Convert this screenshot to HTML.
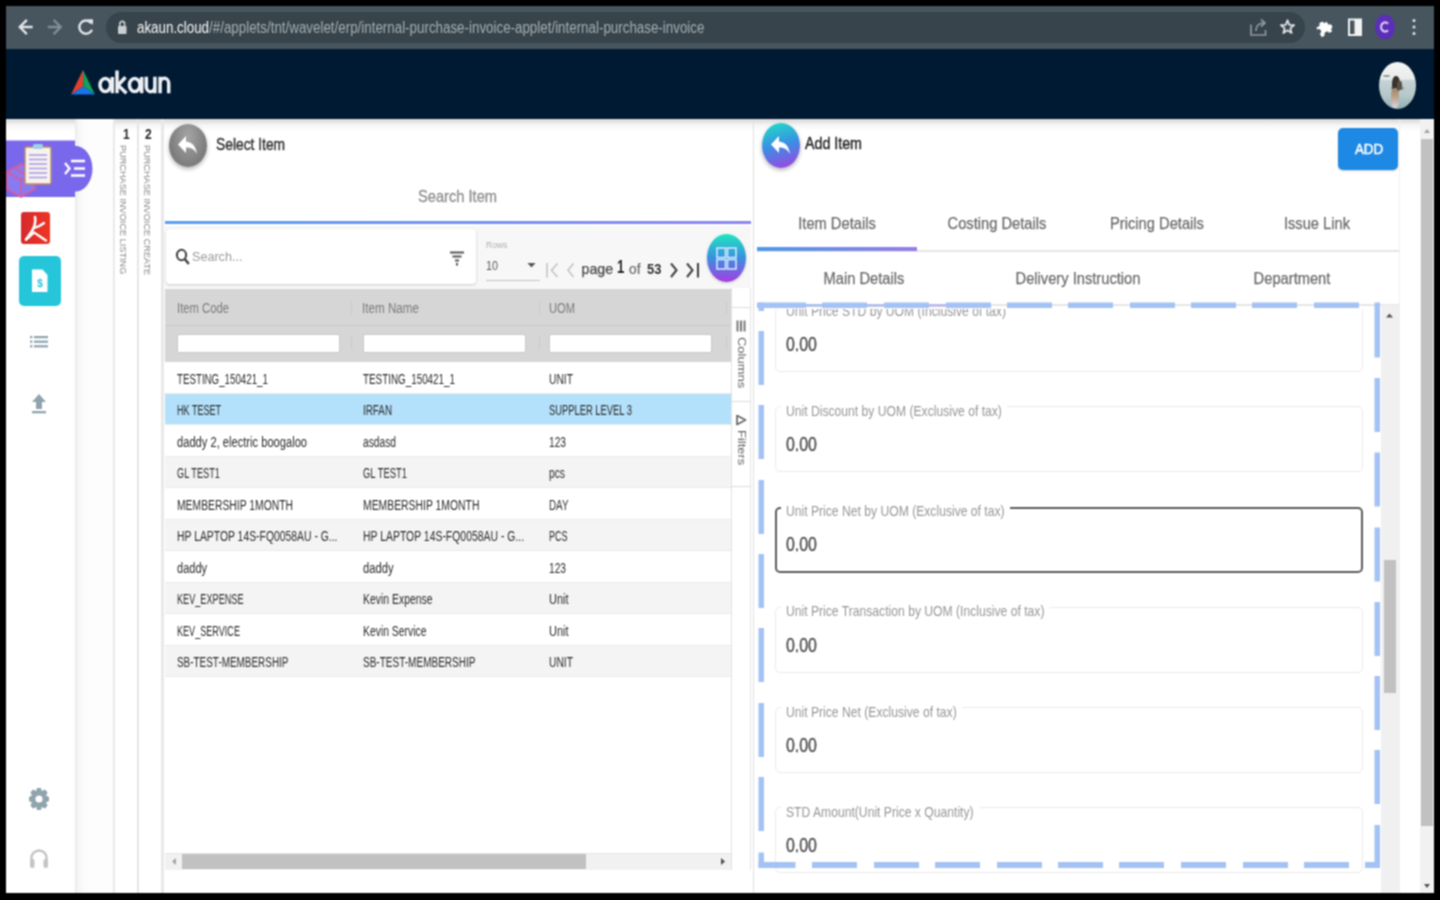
<!DOCTYPE html>
<html><head><meta charset="utf-8">
<style>
*{box-sizing:border-box;margin:0;padding:0}
html,body{width:1440px;height:900px;overflow:hidden;background:#000;font-family:"Liberation Sans",sans-serif}
.a{position:absolute}
.nw{white-space:nowrap}
</style></head><body><svg width="0" height="0" style="position:absolute"><filter id="soft" x="0" y="0" width="100%" height="100%" color-interpolation-filters="sRGB"><feConvolveMatrix order="3" kernelMatrix="1 2 1 2 4 2 1 2 1" preserveAlpha="true" edgeMode="duplicate"/></filter></svg><div id="root" style="position:absolute;left:0;top:0;width:1440px;height:900px;overflow:hidden;background:#000;filter:url(#soft)">
<div class="a" style="left:6px;top:6px;width:1428px;height:43px;background:#47555e;"></div>
<div class="a" style="left:106px;top:11.7px;width:1199px;height:31.6px;background:#38444b;border-radius:16px"></div>
<svg class="a" style="left:0;top:0" width="1440" height="50" viewBox="0 0 1440 50">
 <g fill="none" stroke="#dfe3e6" stroke-width="2.4" stroke-linecap="square">
  <path d="M31.5 27 H20.5 M26 20.8 L19.8 27 L26 33.2"/>
 </g>
 <g fill="none" stroke="#7f8d95" stroke-width="2.4" stroke-linecap="square">
  <path d="M49 27 H60 M54.5 20.8 L60.7 27 L54.5 33.2"/>
 </g>
 <path d="M91.3 23.2 A6.6 6.6 0 1 0 92 29.8" fill="none" stroke="#dfe3e6" stroke-width="2.4"/>
 <path d="M87.3 19.3 L93 19.3 L93 25 Z" fill="#dfe3e6"/>
 <rect x="118" y="26" width="8.5" height="8" rx="1" fill="#c9ced1"/>
 <path d="M119.8 26.5 V23.8 a2.4 2.4 0 0 1 4.8 0 V26.5" fill="none" stroke="#c9ced1" stroke-width="1.6"/>
 <g fill="none" stroke="#8a979e" stroke-width="1.7">
  <path d="M1251 24.5 V35 H1265.5 V30"/>
  <path d="M1256 31 C1256 25 1259 23 1264 23 M1261 19.5 L1265 23 L1261 26.5"/>
 </g>
 <path d="M1287.50 20.30 L1289.26 24.87 L1294.16 25.14 L1290.35 28.23 L1291.61 32.96 L1287.50 30.30 L1283.39 32.96 L1284.65 28.23 L1280.84 25.14 L1285.74 24.87 Z" fill="none" stroke="#dfe3e6" stroke-width="1.8" stroke-linejoin="round"/>
 <path d="M1318 24 H1322 a2.5 2.5 0 0 1 5 0 H1330 V27.5 a2.5 2.5 0 0 1 0 5 V35 H1326.5 a2.5 2.5 0 0 0 -5 0 H1318 V31 a2.5 2.5 0 0 0 0 -5 Z" fill="#fff" transform="rotate(-30 1324 29)"/>
 <rect x="1349" y="19.5" width="12" height="15.5" fill="none" stroke="#f2f2f2" stroke-width="2"/>
 <rect x="1354.5" y="19.5" width="6.5" height="15.5" fill="#f2f2f2"/>
 <ellipse cx="1385" cy="27" rx="10" ry="12.5" fill="#5b2fb8"/>
 <path d="M1388 23.8 A4 4.6 0 1 0 1388 30.2" fill="none" stroke="#d8c9f4" stroke-width="2.2"/>
 <circle cx="1414" cy="20.5" r="1.5" fill="#dfe3e6"/><circle cx="1414" cy="27" r="1.5" fill="#dfe3e6"/><circle cx="1414" cy="33.5" r="1.5" fill="#dfe3e6"/>
</svg>
<div class="a nw" style="left:137px;top:19.96px;font-size:16px;line-height:16px;color:#a3adb3;transform-origin:0 0;transform:scale(0.835,1.0);"><span style="color:#f4f6f7">akaun.cloud</span>/#/applets/tnt/wavelet/erp/internal-purchase-invoice-applet/internal-purchase-invoice</div>
<div class="a" style="left:6px;top:49px;width:1428px;height:70px;background:#011a33;"></div>
<svg class="a" style="left:68px;top:66px" width="32" height="32" viewBox="68 66 32 32">
 <path d="M83 70 L71 94.5 L83.3 86.5 Z" fill="#e2402f"/>
 <path d="M83 70 L95 94.5 L83.3 86.5 Z" fill="#16a05a"/>
 <path d="M71 94.5 L83.3 86.5 L95 94.5 Z" fill="#1a73e8"/>
</svg>
<svg class="a" style="left:95px;top:66px" width="80" height="32" viewBox="95 66 80 32">
 <g fill="none" stroke="#eceef1" stroke-width="3.5">
  <ellipse cx="105.3" cy="85" rx="5.3" ry="6.4"/>
  <path d="M112.3 77 V93.2"/>
  <path d="M117 70.5 V93.2"/>
  <path d="M125.5 77.2 L118 85.2 L126.5 93.2"/>
  <ellipse cx="134.7" cy="85" rx="5.3" ry="6.4"/>
  <path d="M141.7 77 V93.2"/>
  <path d="M146.3 76.8 V86.5 A4.3 5.2 0 0 0 154.9 86.5 M154.9 76.8 V93.2"/>
  <path d="M160.1 93.2 V76.8 M160.1 83.5 A4.3 5.2 0 0 1 168.7 83.5 V93.2"/>
 </g>
</svg>
<div class="a" style="left:1379px;top:62px;width:37px;height:47px;border-radius:50%;overflow:hidden;background:linear-gradient(#f4f5f4 0%,#e8ecea 36%,#c4d2d4 40%,#b6c8ca 70%,#92b0b2 100%)">
 <div class="a" style="left:4px;top:13px;width:7px;height:2px;border-radius:40%;background:#8a9a98"></div>
 <div class="a" style="left:12px;top:24px;width:13px;height:4px;border-radius:40%;background:#6d7a70;opacity:0.6"></div>
 <div class="a" style="left:13px;top:14px;width:8px;height:17px;border-radius:45%;background:#38342c"></div>
 <div class="a" style="left:12px;top:26px;width:8px;height:20px;border-radius:40%;background:linear-gradient(#a08568,#b9a28a 45%,#dcd6e0)"></div>
 <div class="a" style="left:18px;top:19px;width:5px;height:9px;border-radius:40%;background:#5a5045"></div>
</div>
<div class="a" style="left:6px;top:119px;width:1428px;height:774px;background:#fff;"></div>
<div class="a" style="left:6px;top:119px;width:1428px;height:12px;background:linear-gradient(rgba(0,0,0,0.16),rgba(0,0,0,0.04) 50%,rgba(0,0,0,0));"></div>
<div class="a" style="left:75px;top:119px;width:39px;height:774px;background:linear-gradient(90deg,#e6e6e6 0px,#f3f3f3 2px,#fafafa 7px,#fdfdfd 14px,#fdfdfd);"></div>
<div class="a" style="left:113px;top:119px;width:2px;height:774px;background:#e9e9e9;"></div>
<div class="a" style="left:137px;top:119px;width:2px;height:774px;background:#e6e6e6;"></div>
<div class="a" style="left:161px;top:119px;width:3px;height:774px;background:#e8e8e8;"></div>
<div class="a nw" style="left:122.5px;top:125.80px;font-size:15px;line-height:15px;color:#2a2a2a;font-weight:bold;transform-origin:0 0;transform:scale(0.8,1.0);">1</div>
<div class="a nw" style="left:145px;top:125.80px;font-size:15px;line-height:15px;color:#2a2a2a;font-weight:bold;transform-origin:0 0;transform:scale(0.8,1.0);">2</div>
<div class="a nw" style="left:128px;top:145px;font-size:9.6px;line-height:10px;color:#8a8a8a;transform-origin:0 0;transform:rotate(90deg) scaleX(0.955)">PURCHASE INVOICE LISTING</div>
<div class="a nw" style="left:152px;top:145px;font-size:9.6px;line-height:10px;color:#8a8a8a;transform-origin:0 0;transform:rotate(90deg) scaleX(0.955)">PURCHASE INVOICE CREATE</div>
<svg class="a" style="left:6px;top:138px" width="90" height="62" viewBox="6 138 90 62">
 <path d="M6 140.5 H75 V145.8 A17.5 23 0 0 1 75 191.8 V197 H6 Z" fill="#7a68ec"/>
 <path d="M7 172 L21 164 L35 172 L35 189 L21 197 L7 189 Z" fill="#8a7af2" stroke="#d85a9c" stroke-width="1.6"/>
 <path d="M7 172 L21 180 L35 172 M21 180 V197 M14 168 L28 176 V184" fill="none" stroke="#d85a9c" stroke-width="1.6"/>
 <rect x="25" y="147" width="26" height="37" rx="1.5" fill="#f6f2ee" stroke="#c08a5a" stroke-width="1.3"/>
 <rect x="33" y="144" width="10" height="5" rx="1.5" fill="#9fd0e8"/>
 <g stroke="#a79be6" stroke-width="1.3"><path d="M29 155H47M29 159.5H47M29 164H47M29 168.5H47M29 173H47M29 177.5H47"/></g>
 <g stroke="#fff" stroke-width="2.3" fill="none"><path d="M65 163 L69.5 168.5 L65 174"/><path d="M71 161H85M74 168.5H85M71 175.5H85"/></g>
</svg>
<div class="a" style="left:21px;top:212px;width:29px;height:32px;background:linear-gradient(90deg,#d42a2e,#ee3523);border-radius:3px"></div>
<svg class="a" style="left:21px;top:212px" width="29" height="32" viewBox="0 0 29 32">
 <g fill="none" stroke="#fff" stroke-linecap="round" stroke-linejoin="round">
  <path d="M14 5 C15 10 14 14 11 19 C9 22 7 25 5 27.5" stroke-width="2.6"/>
  <path d="M12 16.5 C16 15.5 20 13.5 23 11" stroke-width="2.3"/>
  <path d="M13 20.5 C17 23 21 26 25 28.5" stroke-width="2.3"/>
  <path d="M5 27.5 C8 26 10 23.5 12.5 21" stroke-width="2"/>
 </g>
</svg>
<div class="a" style="left:19px;top:256px;width:42px;height:50px;background:#26c6da;border-radius:5px"></div>
<svg class="a" style="left:19px;top:256px" width="42" height="50" viewBox="0 0 42 50">
 <path d="M13 13.5 H23.5 L28.5 19 V36 H13 Z" fill="#fff"/>
 <text x="21" y="30.5" font-size="10" font-family="Liberation Sans" font-weight="bold" fill="#26c6da" text-anchor="middle">$</text>
</svg>
<svg class="a" style="left:28px;top:333px" width="22" height="18" viewBox="28 333 22 18">
 <g fill="#90a4ae"><rect x="30" y="336" width="2.4" height="2.2"/><rect x="30" y="340.6" width="2.4" height="2.2"/><rect x="30" y="345.2" width="2.4" height="2.2"/>
 <rect x="34" y="336" width="14" height="2.2"/><rect x="34" y="340.6" width="14" height="2.2"/><rect x="34" y="345.2" width="14" height="2.2"/></g>
</svg>
<svg class="a" style="left:28px;top:390px" width="22" height="26" viewBox="28 390 22 26">
 <path d="M39 394 L46 402 H42 V409 H36 V402 H32 Z" fill="#90a4ae"/>
 <rect x="32" y="411" width="14" height="2.3" fill="#90a4ae"/>
</svg>
<svg class="a" style="left:27px;top:786px" width="24" height="26" viewBox="27 786 24 26">
 <g transform="translate(39 799)">
  <path d="M-2 -11 H2 L2.8 -8 L6 -9.5 L8.6 -6.4 L7 -3.5 L10 -2 V2 L7 3.5 L8.6 6.4 L6 9.5 L2.8 8 L2 11 H-2 L-2.8 8 L-6 9.5 L-8.6 6.4 L-7 3.5 L-10 2 V-2 L-7 -3.5 L-8.6 -6.4 L-6 -9.5 L-2.8 -8 Z" fill="#90a4ae"/>
  <circle r="3.6" fill="#fff"/>
 </g>
</svg>
<svg class="a" style="left:27px;top:845px" width="24" height="26" viewBox="27 845 24 26">
 <path d="M31.5 864 V858 A7.5 7.5 0 0 1 46.5 858 V864" fill="none" stroke="#c4c4c4" stroke-width="2.4"/>
 <rect x="30" y="859" width="4.5" height="9" rx="2" fill="#c4c4c4"/>
 <rect x="43.5" y="859" width="4.5" height="9" rx="2" fill="#c4c4c4"/>
</svg>
<div class="a" style="left:169px;top:124px;width:38px;height:43px;border-radius:50%;background:radial-gradient(ellipse at 50% 30%,#a5a5a5,#6a6a6a);box-shadow:0 2px 4px rgba(0,0,0,0.3)"></div>
<svg class="a" style="left:169px;top:124px" width="38" height="43" viewBox="0 0 38 43">
 <path d="M17 12 L9 20.5 L17 29 V23.5 C22 23.5 25.5 25 28 30 C27 23 23.5 18 17 17.5 Z" fill="#fff"/>
</svg>
<div class="a nw" style="left:216px;top:135.79px;font-size:16.2px;line-height:16.2px;color:#383838;-webkit-text-stroke:0.45px #383838;transform-origin:0 0;transform:scale(0.853,1.0);">Select Item</div>
<div class="a nw" style="left:418px;top:188.09px;font-size:16.2px;line-height:16.2px;color:#8e8e8e;-webkit-text-stroke:0.3px #8e8e8e;transform-origin:0 0;transform:scale(0.905,1.0);">Search Item</div>
<div class="a" style="left:165px;top:221px;width:586px;height:3px;background:linear-gradient(90deg,#5b9ee9,#8e86ea);"></div>
<div class="a" style="left:165px;top:226px;width:586px;height:63px;background:#f7f7f7;"></div>
<div class="a" style="left:166px;top:229px;width:310px;height:55px;background:#fff;border-radius:4px;box-shadow:0 1px 3px rgba(0,0,0,0.18)"></div>
<svg class="a" style="left:174px;top:247px" width="18" height="20" viewBox="0 0 18 20">
 <ellipse cx="7.5" cy="8" rx="4.6" ry="5.2" fill="none" stroke="#444" stroke-width="2.1"/>
 <path d="M10.8 12 L14.8 17" stroke="#444" stroke-width="2.5"/>
</svg>
<div class="a nw" style="left:192px;top:249.90px;font-size:13.7px;line-height:13.7px;color:#9c9c9c;transform-origin:0 0;transform:scale(0.92,1.0);">Search...</div>
<svg class="a" style="left:448px;top:249px" width="18" height="18" viewBox="0 0 18 18">
 <path d="M2 3.5H16M4.5 7.5H13.5M7 11.5H11" stroke="#555" stroke-width="2"/><rect x="8" y="14" width="2" height="2.5" fill="#555"/>
</svg>
<div class="a nw" style="left:486px;top:241.38px;font-size:9px;line-height:9px;color:#b0b0b0;transform-origin:0 0;transform:scale(0.95,1.0);">Rows</div>
<div class="a nw" style="left:486px;top:259.07px;font-size:13.5px;line-height:13.5px;color:#5a5a5a;transform-origin:0 0;transform:scale(0.8,1.0);">10</div>
<svg class="a" style="left:524px;top:260px" width="14" height="10" viewBox="0 0 14 10"><path d="M3.5 3 H11.5 L7.5 7.5 Z" fill="#555"/></svg>
<div class="a" style="left:486px;top:279.5px;width:54px;height:1.2px;background:#c4c4c4;"></div>
<svg class="a" style="left:543px;top:258px" width="160" height="24" viewBox="543 258 160 24">
 <g fill="none" stroke="#c4c4c4" stroke-width="1.6"><path d="M547 263V277.5M557.5 263.5L551.5 270.2L557.5 277"/><path d="M573.5 263.5L568 270.2L573.5 277"/></g>
 <g fill="none" stroke="#444" stroke-width="2.1"><path d="M671 263.5L676.5 270.2L671 277"/><path d="M687 263.5L692.5 270.2L687 277M698 263V277.5"/></g>
</svg>
<div class="a nw" style="left:581.5px;top:261.98px;font-size:14.2px;line-height:14.2px;color:#4a4a4a;-webkit-text-stroke:0.25px #4a4a4a;transform-origin:0 0;">page</div>
<div class="a nw" style="left:616.5px;top:259.19px;font-size:17.5px;line-height:17.5px;color:#2a2a2a;font-weight:bold;transform-origin:0 0;transform:scale(0.75,1.0);">1</div>
<div class="a nw" style="left:628.5px;top:261.73px;font-size:14.5px;line-height:14.5px;color:#6a6a6a;-webkit-text-stroke:0.2px #6a6a6a;transform-origin:0 0;transform:scale(0.95,1.0);">of</div>
<div class="a nw" style="left:647px;top:261.30px;font-size:15px;line-height:15px;color:#333;font-weight:bold;transform-origin:0 0;transform:scale(0.86,1.0);">53</div>
<div class="a" style="left:707px;top:234px;width:39px;height:48px;border-radius:50%;background:linear-gradient(#1de6c0,#3a8fe0 50%,#a63de0);box-shadow:0 1px 3px rgba(0,0,0,0.2)"></div>
<svg class="a" style="left:707px;top:234px" width="39" height="48" viewBox="0 0 39 48">
 <g fill="none" stroke="#cfe6ff" stroke-width="1.6"><rect x="10" y="14" width="8.5" height="9.5"/><rect x="20.5" y="14" width="8.5" height="9.5"/><rect x="10" y="25.5" width="8.5" height="9.5"/><rect x="20.5" y="25.5" width="8.5" height="9.5"/></g>
</svg>
<div class="a" style="left:165px;top:289px;width:566px;height:73px;background:#d6d6d6;"></div>
<div class="a" style="left:165px;top:325px;width:566px;height:1px;background:#cbcbcb;"></div>
<div class="a" style="left:351px;top:302px;width:1px;height:12px;background:#c9c9c9;"></div>
<div class="a" style="left:351px;top:337px;width:1px;height:12px;background:#c9c9c9;"></div>
<div class="a" style="left:539px;top:302px;width:1px;height:12px;background:#c9c9c9;"></div>
<div class="a" style="left:539px;top:337px;width:1px;height:12px;background:#c9c9c9;"></div>
<div class="a" style="left:726px;top:302px;width:1px;height:12px;background:#c9c9c9;"></div>
<div class="a" style="left:726px;top:337px;width:1px;height:12px;background:#c9c9c9;"></div>
<div class="a nw" style="left:177px;top:301.34px;font-size:13px;line-height:13px;color:#7c7c7c;transform-origin:0 0;transform:scale(0.868,1.06);">Item Code</div>
<div class="a nw" style="left:362px;top:301.34px;font-size:13px;line-height:13px;color:#7c7c7c;transform-origin:0 0;transform:scale(0.897,1.06);">Item Name</div>
<div class="a nw" style="left:549px;top:301.34px;font-size:13px;line-height:13px;color:#7c7c7c;transform-origin:0 0;transform:scale(0.858,1.06);">UOM</div>
<div class="a" style="left:177px;top:333.5px;width:163px;height:19.5px;background:#fff;border:1px solid #c5cbcb;border-radius:2px"></div>
<div class="a" style="left:363px;top:333.5px;width:163px;height:19.5px;background:#fff;border:1px solid #c5cbcb;border-radius:2px"></div>
<div class="a" style="left:549px;top:333.5px;width:163px;height:19.5px;background:#fff;border:1px solid #c5cbcb;border-radius:2px"></div>
<div class="a" style="left:165px;top:362.0px;width:566px;height:31.5px;background:#fff;border-bottom:1px solid #ebebeb"></div>
<div class="a nw" style="left:177px;top:371.82px;font-size:13px;line-height:13px;color:#2c2c2c;transform-origin:0 0;transform:scale(0.749,1.08);">TESTING_150421_1</div>
<div class="a nw" style="left:362.5px;top:371.82px;font-size:13px;line-height:13px;color:#2c2c2c;transform-origin:0 0;transform:scale(0.758,1.08);">TESTING_150421_1</div>
<div class="a nw" style="left:549px;top:371.82px;font-size:13px;line-height:13px;color:#2c2c2c;transform-origin:0 0;transform:scale(0.792,1.08);">UNIT</div>
<div class="a" style="left:165px;top:393.5px;width:566px;height:31.5px;background:#b3e0fb;border-bottom:1px solid #ebebeb"></div>
<div class="a nw" style="left:177px;top:403.32px;font-size:13px;line-height:13px;color:#2c2c2c;transform-origin:0 0;transform:scale(0.695,1.08);">HK TESET</div>
<div class="a nw" style="left:362.5px;top:403.32px;font-size:13px;line-height:13px;color:#2c2c2c;transform-origin:0 0;transform:scale(0.759,1.08);">IRFAN</div>
<div class="a nw" style="left:549px;top:403.32px;font-size:13px;line-height:13px;color:#2c2c2c;transform-origin:0 0;transform:scale(0.721,1.08);">SUPPLER LEVEL 3</div>
<div class="a" style="left:165px;top:425.0px;width:566px;height:31.5px;background:#fff;border-bottom:1px solid #ebebeb"></div>
<div class="a nw" style="left:177px;top:434.82px;font-size:13px;line-height:13px;color:#2c2c2c;transform-origin:0 0;transform:scale(0.857,1.08);">daddy 2, electric boogaloo</div>
<div class="a nw" style="left:362.5px;top:434.82px;font-size:13px;line-height:13px;color:#2c2c2c;transform-origin:0 0;transform:scale(0.788,1.08);">asdasd</div>
<div class="a nw" style="left:549px;top:434.82px;font-size:13px;line-height:13px;color:#2c2c2c;transform-origin:0 0;transform:scale(0.783,1.08);">123</div>
<div class="a" style="left:165px;top:456.5px;width:566px;height:31.5px;background:#f4f4f4;border-bottom:1px solid #ebebeb"></div>
<div class="a nw" style="left:177px;top:466.32px;font-size:13px;line-height:13px;color:#2c2c2c;transform-origin:0 0;transform:scale(0.708,1.08);">GL TEST1</div>
<div class="a nw" style="left:362.5px;top:466.32px;font-size:13px;line-height:13px;color:#2c2c2c;transform-origin:0 0;transform:scale(0.725,1.08);">GL TEST1</div>
<div class="a nw" style="left:549px;top:466.32px;font-size:13px;line-height:13px;color:#2c2c2c;transform-origin:0 0;transform:scale(0.789,1.08);">pcs</div>
<div class="a" style="left:165px;top:488.0px;width:566px;height:31.5px;background:#fff;border-bottom:1px solid #ebebeb"></div>
<div class="a nw" style="left:177px;top:497.82px;font-size:13px;line-height:13px;color:#2c2c2c;transform-origin:0 0;transform:scale(0.796,1.08);">MEMBERSHIP 1MONTH</div>
<div class="a nw" style="left:362.5px;top:497.82px;font-size:13px;line-height:13px;color:#2c2c2c;transform-origin:0 0;transform:scale(0.799,1.08);">MEMBERSHIP 1MONTH</div>
<div class="a nw" style="left:549px;top:497.82px;font-size:13px;line-height:13px;color:#2c2c2c;transform-origin:0 0;transform:scale(0.758,1.08);">DAY</div>
<div class="a" style="left:165px;top:519.5px;width:566px;height:31.5px;background:#f4f4f4;border-bottom:1px solid #ebebeb"></div>
<div class="a nw" style="left:177px;top:529.32px;font-size:13px;line-height:13px;color:#2c2c2c;transform-origin:0 0;transform:scale(0.799,1.08);">HP LAPTOP 14S-FQ0058AU - G...</div>
<div class="a nw" style="left:362.5px;top:529.32px;font-size:13px;line-height:13px;color:#2c2c2c;transform-origin:0 0;transform:scale(0.802,1.08);">HP LAPTOP 14S-FQ0058AU - G...</div>
<div class="a nw" style="left:549px;top:529.32px;font-size:13px;line-height:13px;color:#2c2c2c;transform-origin:0 0;transform:scale(0.691,1.08);">PCS</div>
<div class="a" style="left:165px;top:551.0px;width:566px;height:31.5px;background:#fff;border-bottom:1px solid #ebebeb"></div>
<div class="a nw" style="left:177px;top:560.82px;font-size:13px;line-height:13px;color:#2c2c2c;transform-origin:0 0;transform:scale(0.848,1.08);">daddy</div>
<div class="a nw" style="left:362.5px;top:560.82px;font-size:13px;line-height:13px;color:#2c2c2c;transform-origin:0 0;transform:scale(0.863,1.08);">daddy</div>
<div class="a nw" style="left:549px;top:560.82px;font-size:13px;line-height:13px;color:#2c2c2c;transform-origin:0 0;transform:scale(0.783,1.08);">123</div>
<div class="a" style="left:165px;top:582.5px;width:566px;height:31.5px;background:#f4f4f4;border-bottom:1px solid #ebebeb"></div>
<div class="a nw" style="left:177px;top:592.32px;font-size:13px;line-height:13px;color:#2c2c2c;transform-origin:0 0;transform:scale(0.703,1.08);">KEV_EXPENSE</div>
<div class="a nw" style="left:362.5px;top:592.32px;font-size:13px;line-height:13px;color:#2c2c2c;transform-origin:0 0;transform:scale(0.802,1.08);">Kevin Expense</div>
<div class="a nw" style="left:549px;top:592.32px;font-size:13px;line-height:13px;color:#2c2c2c;transform-origin:0 0;transform:scale(0.843,1.08);">Unit</div>
<div class="a" style="left:165px;top:614.0px;width:566px;height:31.5px;background:#fff;border-bottom:1px solid #ebebeb"></div>
<div class="a nw" style="left:177px;top:623.82px;font-size:13px;line-height:13px;color:#2c2c2c;transform-origin:0 0;transform:scale(0.699,1.08);">KEV_SERVICE</div>
<div class="a nw" style="left:362.5px;top:623.82px;font-size:13px;line-height:13px;color:#2c2c2c;transform-origin:0 0;transform:scale(0.799,1.08);">Kevin Service</div>
<div class="a nw" style="left:549px;top:623.82px;font-size:13px;line-height:13px;color:#2c2c2c;transform-origin:0 0;transform:scale(0.843,1.08);">Unit</div>
<div class="a" style="left:165px;top:645.5px;width:566px;height:31.5px;background:#f4f4f4;border-bottom:1px solid #ebebeb"></div>
<div class="a nw" style="left:177px;top:655.32px;font-size:13px;line-height:13px;color:#2c2c2c;transform-origin:0 0;transform:scale(0.764,1.08);">SB-TEST-MEMBERSHIP</div>
<div class="a nw" style="left:362.5px;top:655.32px;font-size:13px;line-height:13px;color:#2c2c2c;transform-origin:0 0;transform:scale(0.771,1.08);">SB-TEST-MEMBERSHIP</div>
<div class="a nw" style="left:549px;top:655.32px;font-size:13px;line-height:13px;color:#2c2c2c;transform-origin:0 0;transform:scale(0.792,1.08);">UNIT</div>
<div class="a" style="left:165px;top:853px;width:567px;height:17px;background:#f1f1f1;border-top:1px solid #e6e6e6"></div>
<div class="a" style="left:182px;top:854px;width:404px;height:15px;background:#c1c1c1;"></div>
<svg class="a" style="left:165px;top:853px" width="567" height="17" viewBox="0 0 567 17"><path d="M11 5 L7 8.5 L11 12Z" fill="#a3a3a3"/><path d="M556 5 L560 8.5 L556 12Z" fill="#505050"/></svg>
<div class="a" style="left:731px;top:288px;width:20px;height:582px;background:#fff;border-left:1px solid #e2e2e2;border-right:1px solid #e2e2e2"></div>
<div class="a" style="left:731px;top:307px;width:20px;height:1px;background:#dcdcdc;"></div>
<div class="a" style="left:731px;top:401px;width:20px;height:1px;background:#dcdcdc;"></div>
<div class="a" style="left:731px;top:486px;width:20px;height:1px;background:#dcdcdc;"></div>
<svg class="a" style="left:733px;top:318px" width="16" height="16" viewBox="0 0 16 16"><g fill="#777"><rect x="3.5" y="2.5" width="2" height="11"/><rect x="7" y="2.5" width="2" height="11"/><rect x="10.5" y="2.5" width="2" height="11"/></g></svg>
<div class="a nw" style="left:746.5px;top:337px;font-size:11px;line-height:11px;color:#666;transform-origin:0 0;transform:rotate(90deg) scaleX(1.18)">Columns</div>
<svg class="a" style="left:733px;top:412px" width="16" height="16" viewBox="0 0 16 16"><path d="M4 3.5 L12.5 8 L4 12.5 Z" fill="none" stroke="#666" stroke-width="1.7" stroke-linejoin="round"/></svg>
<div class="a nw" style="left:746.5px;top:429.5px;font-size:11px;line-height:11px;color:#666;transform-origin:0 0;transform:rotate(90deg) scaleX(1.18)">Filters</div>
<div class="a" style="left:753px;top:119px;width:1px;height:774px;background:#e0e0e0;"></div>
<div class="a" style="left:762px;top:123px;width:38px;height:45px;border-radius:50%;background:linear-gradient(165deg,#1de2c4 0%,#3b8fe4 48%,#a43fe0 100%);box-shadow:0 2px 4px rgba(0,0,0,0.3)"></div>
<svg class="a" style="left:762px;top:123px" width="38" height="45" viewBox="0 0 38 45">
 <path d="M17 13 L9 21.5 L17 30 V24.5 C22 24.5 25.5 26 28 31 C27 24 23.5 19 17 18.5 Z" fill="#fff"/>
</svg>
<div class="a nw" style="left:805px;top:135.94px;font-size:15.9px;line-height:15.9px;color:#2a2a2a;-webkit-text-stroke:0.45px #2a2a2a;transform-origin:0 0;transform:scale(0.896,1.0);">Add Item</div>
<div class="a" style="left:1338px;top:128px;width:60px;height:42px;background:#1e88e5;border-radius:5px;box-shadow:0 1px 2px rgba(0,0,0,0.2)"></div>
<div class="a nw" style="left:1368.5px;top:142.23px;font-size:14.5px;line-height:14.5px;color:#fff;-webkit-text-stroke:0.45px #fff;transform-origin:0 0;transform:scale(0.92,1.0) translateX(-50%);">ADD</div>
<div class="a nw" style="left:836.5px;top:216.13px;font-size:15.8px;line-height:15.8px;color:#6c6c6c;-webkit-text-stroke:0.25px #6c6c6c;transform-origin:0 0;transform:scale(0.93,1.0) translateX(-50%);">Item Details</div>
<div class="a nw" style="left:996.83px;top:216.13px;font-size:15.8px;line-height:15.8px;color:#6c6c6c;-webkit-text-stroke:0.25px #6c6c6c;transform-origin:0 0;transform:scale(0.93,1.0) translateX(-50%);">Costing Details</div>
<div class="a nw" style="left:1157.16px;top:216.13px;font-size:15.8px;line-height:15.8px;color:#6c6c6c;-webkit-text-stroke:0.25px #6c6c6c;transform-origin:0 0;transform:scale(0.93,1.0) translateX(-50%);">Pricing Details</div>
<div class="a nw" style="left:1317.49px;top:216.13px;font-size:15.8px;line-height:15.8px;color:#6c6c6c;-webkit-text-stroke:0.25px #6c6c6c;transform-origin:0 0;transform:scale(0.93,1.0) translateX(-50%);">Issue Link</div>
<div class="a" style="left:757px;top:250px;width:642px;height:1.5px;background:#e6e6e6;"></div>
<div class="a" style="left:757px;top:247px;width:160px;height:3.5px;background:linear-gradient(90deg,#4b9ae8,#9a7ce8);"></div>
<div class="a nw" style="left:863.5px;top:270.63px;font-size:15.8px;line-height:15.8px;color:#6c6c6c;-webkit-text-stroke:0.25px #6c6c6c;transform-origin:0 0;transform:scale(0.93,1.0) translateX(-50%);">Main Details</div>
<div class="a nw" style="left:1077.5px;top:270.63px;font-size:15.8px;line-height:15.8px;color:#6c6c6c;-webkit-text-stroke:0.25px #6c6c6c;transform-origin:0 0;transform:scale(0.93,1.0) translateX(-50%);">Delivery Instruction</div>
<div class="a nw" style="left:1291.5px;top:270.63px;font-size:15.8px;line-height:15.8px;color:#6c6c6c;-webkit-text-stroke:0.25px #6c6c6c;transform-origin:0 0;transform:scale(0.93,1.0) translateX(-50%);">Department</div>
<div class="a" style="left:757px;top:304px;width:642px;height:1.5px;background:#e6e6e6;"></div>
<div class="a" style="left:757px;top:303.5px;width:233px;height:3px;background:linear-gradient(90deg,#4b9ae8,#9a7ce8);opacity:0.45"></div>
<div class="a" style="left:759px;top:308.5px;width:620px;height:584px;overflow:hidden">
<div class="a" style="left:16px;top:-2.3000000000000114px;width:588px;height:66px;border:1px solid #ebebeb;border-radius:5px"></div>
<div class="a" style="left:22px;top:-6.300000000000011px;width:230.0px;height:8px;background:#fff"></div>
<div class="a nw" style="left:27px;top:-3.91px;font-size:13.72px;line-height:13.72px;color:#979797;transform-origin:0 0;transform:scale(0.885,1.0);">Unit Price STD by UOM (Inclusive of tax)</div>
<div class="a nw" style="left:27px;top:25.27px;font-size:18.5px;line-height:18.5px;color:#505050;-webkit-text-stroke:0.35px #505050;transform-origin:0 0;transform:scale(0.86,1.1);">0.00</div>
<div class="a" style="left:16px;top:97.94999999999999px;width:588px;height:66px;border:1px solid #ebebeb;border-radius:5px"></div>
<div class="a" style="left:22px;top:93.94999999999999px;width:225.9px;height:8px;background:#fff"></div>
<div class="a nw" style="left:27px;top:96.34px;font-size:13.72px;line-height:13.72px;color:#979797;transform-origin:0 0;transform:scale(0.885,1.0);">Unit Discount by UOM (Exclusive of tax)</div>
<div class="a nw" style="left:27px;top:125.52px;font-size:18.5px;line-height:18.5px;color:#505050;-webkit-text-stroke:0.35px #505050;transform-origin:0 0;transform:scale(0.86,1.1);">0.00</div>
<div class="a" style="left:16px;top:198.2px;width:588px;height:66px;border:2px solid #5c5c5c;border-radius:5px"></div>
<div class="a" style="left:22px;top:194.2px;width:228.6px;height:8px;background:#fff"></div>
<div class="a nw" style="left:27px;top:196.59px;font-size:13.72px;line-height:13.72px;color:#979797;transform-origin:0 0;transform:scale(0.885,1.0);">Unit Price Net by UOM (Exclusive of tax)</div>
<div class="a nw" style="left:27px;top:225.77px;font-size:18.5px;line-height:18.5px;color:#505050;-webkit-text-stroke:0.35px #505050;transform-origin:0 0;transform:scale(0.86,1.1);">0.00</div>
<div class="a" style="left:16px;top:298.45000000000005px;width:588px;height:66px;border:1px solid #ebebeb;border-radius:5px"></div>
<div class="a" style="left:22px;top:294.45000000000005px;width:268.4px;height:8px;background:#fff"></div>
<div class="a nw" style="left:27px;top:296.84px;font-size:13.72px;line-height:13.72px;color:#979797;transform-origin:0 0;transform:scale(0.885,1.0);">Unit Price Transaction by UOM (Inclusive of tax)</div>
<div class="a nw" style="left:27px;top:326.02px;font-size:18.5px;line-height:18.5px;color:#505050;-webkit-text-stroke:0.35px #505050;transform-origin:0 0;transform:scale(0.86,1.1);">0.00</div>
<div class="a" style="left:16px;top:398.70000000000005px;width:588px;height:66px;border:1px solid #ebebeb;border-radius:5px"></div>
<div class="a" style="left:22px;top:394.70000000000005px;width:180.7px;height:8px;background:#fff"></div>
<div class="a nw" style="left:27px;top:397.09px;font-size:13.72px;line-height:13.72px;color:#979797;transform-origin:0 0;transform:scale(0.885,1.0);">Unit Price Net (Exclusive of tax)</div>
<div class="a nw" style="left:27px;top:426.27px;font-size:18.5px;line-height:18.5px;color:#505050;-webkit-text-stroke:0.35px #505050;transform-origin:0 0;transform:scale(0.86,1.1);">0.00</div>
<div class="a" style="left:16px;top:498.95000000000005px;width:588px;height:66px;border:1px solid #ebebeb;border-radius:5px"></div>
<div class="a" style="left:22px;top:494.95000000000005px;width:197.6px;height:8px;background:#fff"></div>
<div class="a nw" style="left:27px;top:497.34px;font-size:13.72px;line-height:13.72px;color:#979797;transform-origin:0 0;transform:scale(0.885,1.0);">STD Amount(Unit Price x Quantity)</div>
<div class="a nw" style="left:27px;top:526.52px;font-size:18.5px;line-height:18.5px;color:#505050;-webkit-text-stroke:0.35px #505050;transform-origin:0 0;transform:scale(0.86,1.1);">0.00</div>
</div>
<svg class="a" style="left:0;top:0" width="1440" height="900" viewBox="0 0 1440 900"><g fill="#a4c2f4"><rect x="822" y="302.5" width="45" height="5.5"/><rect x="884" y="302.5" width="45" height="5.5"/><rect x="946" y="302.5" width="45" height="5.5"/><rect x="1007" y="302.5" width="45" height="5.5"/><rect x="1068" y="302.5" width="45" height="5.5"/><rect x="1130" y="302.5" width="45" height="5.5"/><rect x="1191" y="302.5" width="45" height="5.5"/><rect x="1252" y="302.5" width="45" height="5.5"/><rect x="1314" y="302.5" width="45" height="5.5"/><rect x="757" y="302.5" width="49" height="5.5"/><rect x="758.5" y="302.5" width="5.5" height="8.5"/><rect x="1374.5" y="302.5" width="5.5" height="55"/><rect x="758.5" y="331" width="5.5" height="54"/><rect x="758.5" y="405" width="5.5" height="54"/><rect x="758.5" y="480" width="5.5" height="54"/><rect x="758.5" y="554" width="5.5" height="54"/><rect x="758.5" y="628" width="5.5" height="54"/><rect x="758.5" y="703" width="5.5" height="54"/><rect x="758.5" y="777" width="5.5" height="54"/><rect x="758.5" y="852.5" width="5.5" height="15.5"/><rect x="758.5" y="862" width="37" height="6"/><rect x="1374.5" y="378" width="5.5" height="54"/><rect x="1374.5" y="452.5" width="5.5" height="54"/><rect x="1374.5" y="527.5" width="5.5" height="54"/><rect x="1374.5" y="602" width="5.5" height="54"/><rect x="1374.5" y="676" width="5.5" height="54"/><rect x="1374.5" y="750" width="5.5" height="54"/><rect x="1374.5" y="825" width="5.5" height="43"/><rect x="1365" y="862" width="15" height="6"/><rect x="812" y="862" width="45" height="6"/><rect x="874" y="862" width="45" height="6"/><rect x="935" y="862" width="45" height="6"/><rect x="997" y="862" width="45" height="6"/><rect x="1058" y="862" width="45" height="6"/><rect x="1119" y="862" width="45" height="6"/><rect x="1181" y="862" width="45" height="6"/><rect x="1243" y="862" width="45" height="6"/><rect x="1304" y="862" width="45" height="6"/></g></svg>
<div class="a" style="left:1381px;top:305px;width:18px;height:588px;background:#f0f0f0;"></div>
<div class="a" style="left:1384px;top:560px;width:12px;height:133px;background:#c1c1c1;"></div>
<svg class="a" style="left:1381px;top:308px" width="17" height="14" viewBox="0 0 17 14"><path d="M5 9.5 L8.5 5.5 L12 9.5Z" fill="#555"/></svg>
<div class="a" style="left:1398.5px;top:119px;width:1px;height:774px;background:#eeeeee;"></div>
<div class="a" style="left:1420px;top:119px;width:14px;height:774px;background:#f1f1f1;"></div>
<div class="a" style="left:1421px;top:139px;width:12px;height:687px;background:#c1c1c1;"></div>
<svg class="a" style="left:1420px;top:119px" width="14" height="774" viewBox="0 0 14 774"><path d="M4 14 L7 10 L10 14Z" fill="#a3a3a3"/><path d="M4 765 L7 769 L10 765Z" fill="#505050"/></svg>
</div></body></html>
